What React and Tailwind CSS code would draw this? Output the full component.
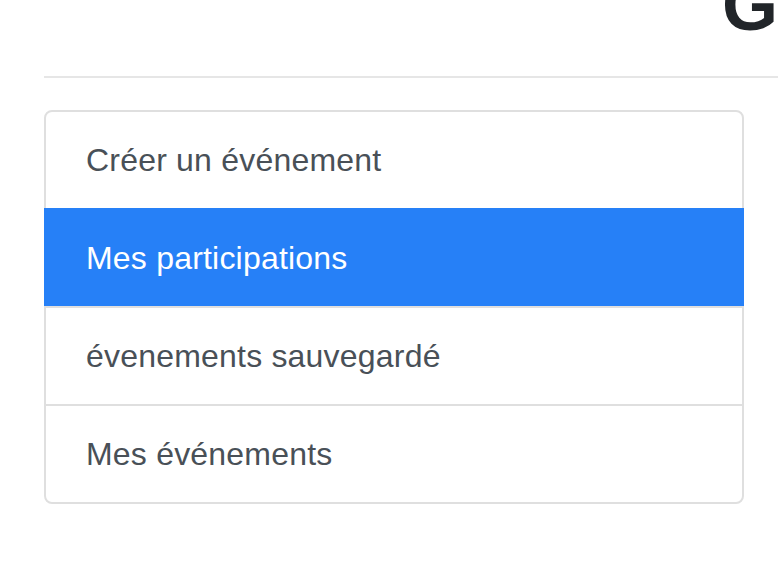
const ITEMS = [
  { label: 'Créer un événement', active: false },
  { label: 'Mes participations', active: true },
  { label: 'évenements sauvegardé', active: false },
  { label: 'Mes événements', active: false },
]

export default function App() {
  return (
    <div className="w-[778px] h-[566px] overflow-hidden bg-white font-['Liberation_Sans',Arial,sans-serif]">
      {/* Heading (cut off at top) */}
      <div className="h-[76px] overflow-hidden flex justify-end">
        <h1 className="mt-[-31px] text-[72px] leading-none font-bold text-[#212529] whitespace-nowrap">G</h1>
      </div>
      <div className="pl-[44px]">
        <hr className="border-0 border-t-2 border-[#e6e6e6] mb-[32px]" />

        <div className="w-[700px] flex flex-col border-2 border-[#dfdfdf] rounded-[8px]">
          {ITEMS.map(({ label, active }, i) => (
            <div
              key={label}
              className={`py-[24px] text-[32px] leading-[48px] tracking-[0.2px] ${
                i > 0 ? 'border-t-2' : ''
              } ${
                active
                  ? 'bg-[#2680f7] text-white border-[#2680f7] -mx-[2px] px-[42px] relative'
                  : 'px-[40px] text-[#495057] border-[#dfdfdf]'
              }`}
            >
              {label}
            </div>
          ))}
        </div>
      </div>
    </div>
  )
}
